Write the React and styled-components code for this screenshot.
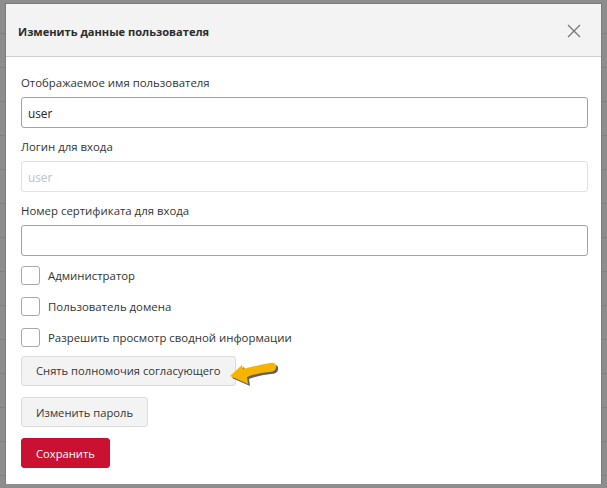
import React from 'react';
import styled, { createGlobalStyle } from 'styled-components';

const GlobalStyle = createGlobalStyle`
    html, body {
        margin: 0;
        padding: 0;
    }
    body {
        width: 607px;
        height: 488px;
        overflow: hidden;
        background-color: #8d8d8d;
        background-image: repeating-linear-gradient(
            to bottom,
            transparent 0,
            transparent 33px,
            #7f7f7f 33px,
            #7f7f7f 34px
        );
        font-family: "Open Sans", "Noto Sans", sans-serif;
        color: #333;
    }
`;

const Backdrop = styled.div`
    padding: 3px 5px 0 5px;
`;

const Modal = styled.div`
    width: 597px;
    height: 481px;
    box-sizing: border-box;
    background: #fff;
    border: 1px solid #7c7c7c;
    border-bottom: none;
    display: flex;
    flex-direction: column;
`;

const Header = styled.div`
    height: 57px;
    box-sizing: border-box;
    background: #f3f3f3;
    border-bottom: 1px solid #cfcfcf;
    display: flex;
    align-items: center;
    justify-content: space-between;
    padding: 2px 20px 0 12px;
`;

const Title = styled.h4`
    margin: 0;
    font-size: 11.1px;
    font-weight: 700;
    color: #2b2b2b;
`;

const Close = styled.button`
    border: none;
    background: none;
    padding: 0;
    width: 14px;
    height: 14px;
    display: flex;
    cursor: pointer;
`;

const Body = styled.div`
    padding: 17px 13px 16px 15px;
    display: flex;
    flex-direction: column;
`;

const Field = styled.div`
    display: flex;
    flex-direction: column;
    margin-bottom: 10px;
`;

const Label = styled.label`
    font-size: 11.4px;
    line-height: 18px;
    color: #333;
    margin-bottom: 5px;
`;

const Input = styled.input`
    height: 31px;
    box-sizing: border-box;
    border: 1px solid ${(p) => (p.disabled ? '#e2e2e2' : '#a2a2a2')};
    border-radius: 3px;
    background: #fff;
    padding: 0 6px;
    font-family: inherit;
    font-size: 11.8px;
    color: ${(p) => (p.disabled ? '#c2c2c2' : '#222')};
    outline: none;
`;

const Checks = styled.div`
    display: flex;
    flex-direction: column;
    gap: 12px;
    margin-bottom: 8px;
`;

const CheckRow = styled.label`
    display: flex;
    align-items: center;
    gap: 8px;
    font-size: 11.4px;
    color: #333;
    height: 19px;
`;

const Box = styled.span`
    width: 19px;
    height: 19px;
    box-sizing: border-box;
    border: 1px solid #a8a8a8;
    border-radius: 3px;
    background: #fff;
`;

const Actions = styled.div`
    display: flex;
    flex-direction: column;
    align-items: flex-start;
    gap: 11px;
`;

const ButtonRow = styled.div`
    display: flex;
    align-items: center;
`;

const Button = styled.button`
    height: 30px;
    box-sizing: border-box;
    padding: 0 14px;
    border-radius: 3px;
    font-family: inherit;
    font-size: 11.2px;
    cursor: pointer;
    border: 1px solid ${(p) => (p.$primary ? '#c8102e' : '#dcdcdc')};
    background: ${(p) => (p.$primary ? '#ca1131' : '#f3f3f3')};
    color: ${(p) => (p.$primary ? '#fff' : '#333')};
`;

const Arrow = styled.svg`
    margin-left: -8px;
    margin-top: 6px;
    overflow: visible;
`;

function CheckItem({ children }) {
    return (
        <CheckRow>
            <Box />
            {children}
        </CheckRow>
    );
}

const ARROW = 'M2 15 L14 4 L15 8 Q29 4 42 2 Q49 1 48 7 Q47 11 41 11 Q29 12 19 16 L20 23 Z';

export default function App() {
    return (
        <>
            <GlobalStyle />
            <Backdrop>
                <Modal>
                    <Header>
                        <Title>Изменить данные пользователя</Title>
                        <Close aria-label="close">
                            <svg width="14" height="14" viewBox="0 0 14 14">
                                <path d="M1 1L13 13M13 1L1 13" stroke="#777" strokeWidth="1.3" />
                            </svg>
                        </Close>
                    </Header>
                    <Body>
                        <Field>
                            <Label>Отображаемое имя пользователя</Label>
                            <Input defaultValue="user" />
                        </Field>
                        <Field>
                            <Label>Логин для входа</Label>
                            <Input disabled defaultValue="user" />
                        </Field>
                        <Field>
                            <Label>Номер сертификата для входа</Label>
                            <Input defaultValue="" />
                        </Field>
                        <Checks>
                            <CheckItem>Администратор</CheckItem>
                            <CheckItem>Пользователь домена</CheckItem>
                            <CheckItem>Разрешить просмотр сводной информации</CheckItem>
                        </Checks>
                        <Actions>
                            <ButtonRow>
                                <Button>Снять полномочия согласующего</Button>
                                <Arrow width="50" height="25" viewBox="0 0 50 25">
                                    <path d={ARROW} fill="#3a3a3a" transform="translate(2 2)" opacity="0.8" />
                                    <path d={ARROW} fill="#f6b400" />
                                </Arrow>
                            </ButtonRow>
                            <Button>Изменить пароль</Button>
                            <Button $primary>Сохранить</Button>
                        </Actions>
                    </Body>
                </Modal>
            </Backdrop>
        </>
    );
}
